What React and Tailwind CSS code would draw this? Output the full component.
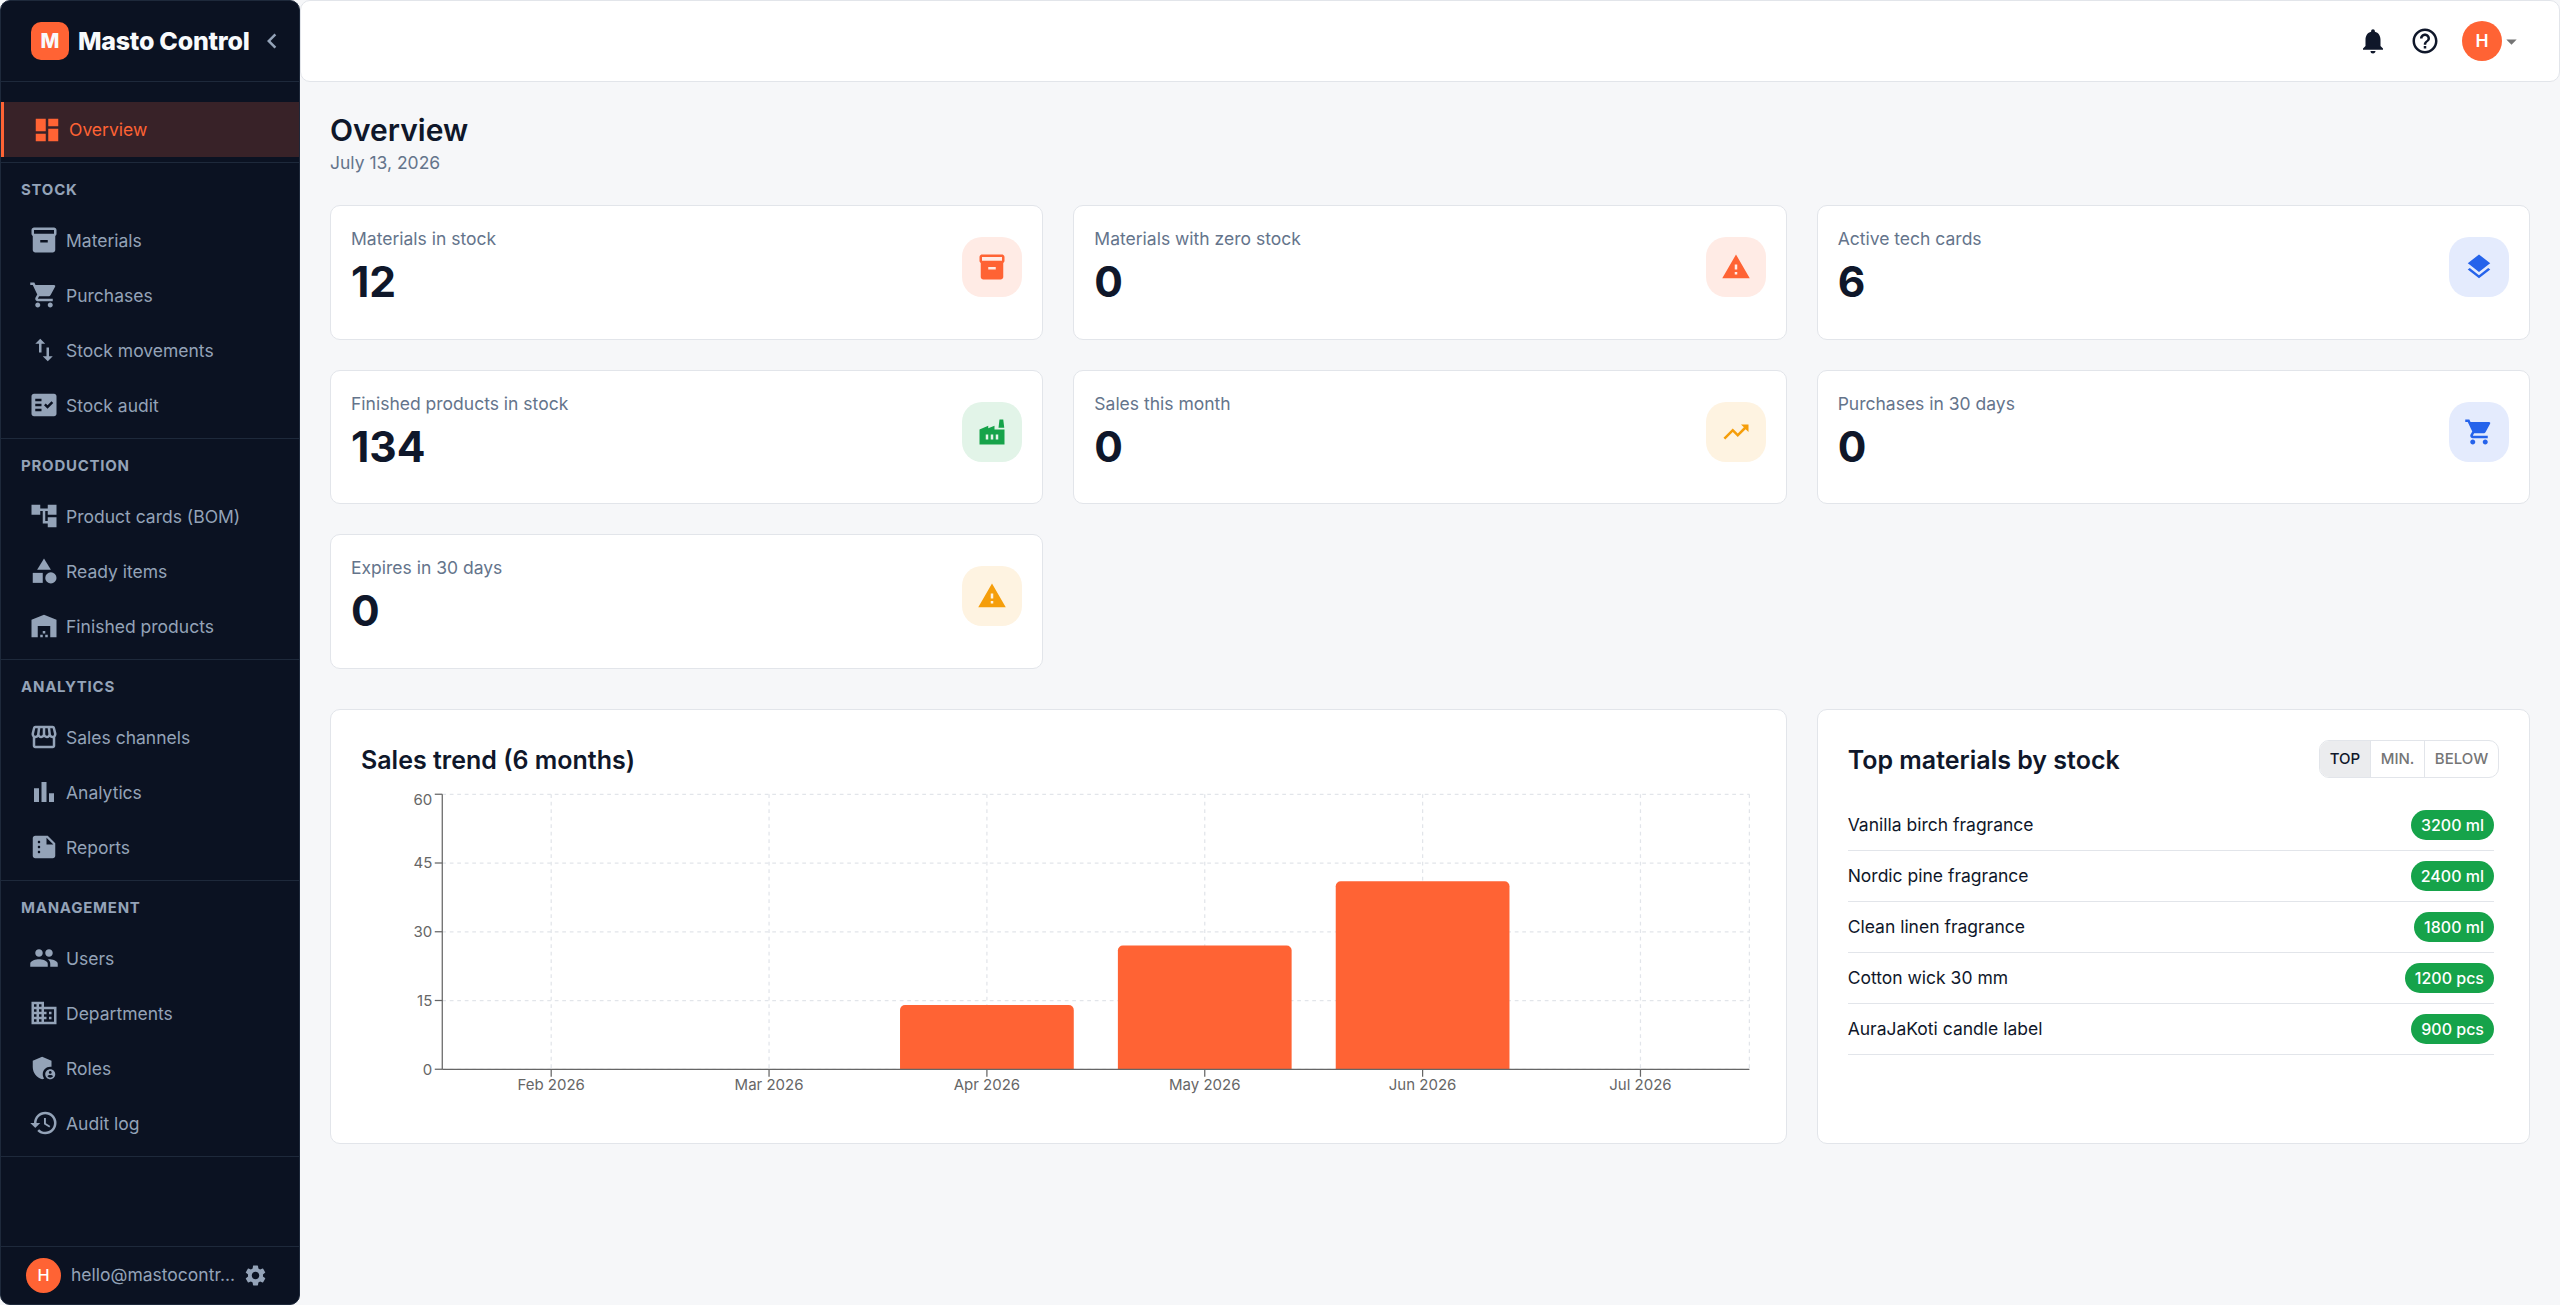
import {
  MdAccountTree,
  MdAdminPanelSettings,
  MdArrowDropDown,
  MdBarChart,
  MdBusiness,
  MdCategory,
  MdChevronLeft,
  MdDashboard,
  MdFactCheck,
  MdFactory,
  MdHelpOutline,
  MdHistory,
  MdInventory2,
  MdLayers,
  MdNotifications,
  MdOutlineStorefront,
  MdPeople,
  MdSettings,
  MdShoppingCart,
  MdSummarize,
  MdSwapVert,
  MdTrendingUp,
  MdWarehouse,
  MdWarning,
} from "react-icons/md";

const sections = [
  {
    title: "Stock",
    items: [
      { label: "Materials", icon: MdInventory2 },
      { label: "Purchases", icon: MdShoppingCart },
      { label: "Stock movements", icon: MdSwapVert },
      { label: "Stock audit", icon: MdFactCheck },
    ],
  },
  {
    title: "Production",
    items: [
      { label: "Product cards (BOM)", icon: MdAccountTree },
      { label: "Ready items", icon: MdCategory },
      { label: "Finished products", icon: MdWarehouse },
    ],
  },
  {
    title: "Analytics",
    items: [
      { label: "Sales channels", icon: MdOutlineStorefront },
      { label: "Analytics", icon: MdBarChart },
      { label: "Reports", icon: MdSummarize },
    ],
  },
  {
    title: "Management",
    items: [
      { label: "Users", icon: MdPeople },
      { label: "Departments", icon: MdBusiness },
      { label: "Roles", icon: MdAdminPanelSettings },
      { label: "Audit log", icon: MdHistory },
    ],
  },
];

const stats = [
  { label: "Materials in stock", value: 12, icon: MdInventory2, tone: "bg-[#ffebe5] text-[#ff6334]" },
  { label: "Materials with zero stock", value: 0, icon: MdWarning, tone: "bg-[#ffebe5] text-[#ff6334]" },
  { label: "Active tech cards", value: 6, icon: MdLayers, tone: "bg-[#e4ebfd] text-[#2563eb]" },
  { label: "Finished products in stock", value: 134, icon: MdFactory, tone: "bg-[#e2f4e8] text-[#16a34a]" },
  { label: "Sales this month", value: 0, icon: MdTrendingUp, tone: "bg-[#fef3e1] text-[#f59e0b]" },
  { label: "Purchases in 30 days", value: 0, icon: MdShoppingCart, tone: "bg-[#e4ebfd] text-[#2563eb]" },
  { label: "Expires in 30 days", value: 0, icon: MdWarning, tone: "bg-[#fef3e1] text-[#f59e0b]" },
];

const sales = [
  { month: "Feb 2026", value: 0 },
  { month: "Mar 2026", value: 0 },
  { month: "Apr 2026", value: 14 },
  { month: "May 2026", value: 27 },
  { month: "Jun 2026", value: 41 },
  { month: "Jul 2026", value: 0 },
];

const materials = [
  { name: "Vanilla birch fragrance", amount: "3200 ml" },
  { name: "Nordic pine fragrance", amount: "2400 ml" },
  { name: "Clean linen fragrance", amount: "1800 ml" },
  { name: "Cotton wick 30 mm", amount: "1200 pcs" },
  { name: "AuraJaKoti candle label", amount: "900 pcs" },
];

const Sidebar = () => (
  <aside className="flex w-[300px] shrink-0 flex-col overflow-hidden rounded-[10px] border border-[#1e293b] bg-[#0b1222] text-[#94a3b8]">
    <div className="flex h-[81px] shrink-0 items-center border-b border-[#1e293b] pl-[30px] pr-3">
      <div className="flex size-[38px] items-center justify-center rounded-[10px] bg-[#ff6334] text-[20px] font-extrabold text-slate-50">
        M
      </div>
      <span className="ml-[9px] whitespace-nowrap pt-[2px] text-[25px] font-extrabold tracking-[-0.01em] text-slate-50">
        Masto Control
      </span>
      <MdChevronLeft className="ml-auto size-[30px] shrink-0" />
    </div>

    <nav className="flex-1 pt-5">
      <div className="mb-[5px] flex h-[55px] items-center border-l-[3px] border-[#ff6334] bg-[#382228] pl-7 text-[#ff6334]">
        <MdDashboard className="size-[30px]" />
        <span className="ml-[7px] pt-[2px] text-[17.5px]">Overview</span>
      </div>
      {sections.map((section) => (
        <div key={section.title} className="border-t border-[#1e293b] pb-[5px]">
          <div className="flex h-[50px] items-center pl-5 pt-[5px] text-[15px] font-bold uppercase tracking-[0.05em]">
            {section.title}
          </div>
          {section.items.map(({ label, icon: Icon }) => (
            <div key={label} className="flex h-[55px] items-center pl-7">
              <Icon className="-mt-px size-[30px]" />
              <span className="ml-[7px] pt-[2px] text-[17.5px]">{label}</span>
            </div>
          ))}
        </div>
      ))}
      <div className="border-t border-[#1e293b]" />
    </nav>

    <div className="flex h-[58px] shrink-0 items-center border-t border-[#1e293b] pl-[25px]">
      <div className="flex size-[35px] shrink-0 items-center justify-center rounded-full bg-[#ff6334] text-[16.25px] font-medium text-white">
        H
      </div>
      <span className="ml-2.5 w-[165px] whitespace-nowrap text-[17.5px]">hello@mastocontr...</span>
      <MdSettings className="ml-[7px] size-[25px]" />
    </div>
  </aside>
);

const Topbar = () => (
  <header className="flex h-[82px] shrink-0 items-center justify-end rounded-[10px] border border-[#e2e5ea] bg-white pr-[35px] text-[#0f172a]">
    <MdNotifications className="size-[30px]" />
    <MdHelpOutline className="ml-[22px] size-[30px]" />
    <div className="ml-[22px] flex size-10 items-center justify-center rounded-full bg-[#ff6334] text-[17.5px] font-semibold text-white">
      H
    </div>
    <MdArrowDropDown className="-ml-[3px] size-[25px] text-[#757575]" />
  </header>
);

const StatCard = ({ label, value, icon: Icon, tone }) => (
  <div className="flex items-center justify-between rounded-[10px] border border-[#e2e5ea] bg-white px-5 pb-[30px] pt-5">
    <div>
      <p className="text-[17.5px] leading-[25px] text-[#64748b]">{label}</p>
      <p className="mt-[5px] text-[42.5px] font-bold leading-[52.5px] text-[#0f172a]">{value}</p>
    </div>
    <div className={`flex size-[60px] items-center justify-center rounded-[20px] ${tone}`}>
      <Icon className="size-[30px]" />
    </div>
  </div>
);

const PLOT = { left: 65, right: 1110.7, top: 5, bottom: 225 };
const MAX = 60;
const yTicks = [0, 15, 30, 45, 60];

const SalesChart = () => {
  const band = (PLOT.right - PLOT.left) / sales.length;
  const barWidth = Math.floor(band * 0.8);
  const y = (v) => PLOT.bottom - (v / MAX) * (PLOT.bottom - PLOT.top);
  const x = (i) => PLOT.left + band * (i + 0.5);

  return (
    <svg viewBox="0 0 1115.7 260" className="mt-[8px] h-[325px] w-full">
      <g stroke="#e2e5ea" strokeDasharray="3 3">
        {yTicks.map((t) => (
          <line key={t} x1={PLOT.left} x2={PLOT.right} y1={y(t)} y2={y(t)} />
        ))}
        {sales.map((s, i) => (
          <line key={s.month} x1={x(i)} x2={x(i)} y1={PLOT.top} y2={PLOT.bottom} />
        ))}
        <line x1={PLOT.right} x2={PLOT.right} y1={PLOT.top} y2={PLOT.bottom} />
      </g>
      {sales.map((s, i) => {
        if (!s.value) return null;
        const left = x(i) - barWidth / 2;
        const right = left + barWidth;
        const top = y(s.value);
        return (
          <path
            key={s.month}
            fill="#ff6334"
            d={`M${left},${top + 4}A4,4 0 0 1 ${left + 4},${top}H${right - 4}A4,4 0 0 1 ${right},${top + 4}V${PLOT.bottom}H${left}Z`}
          />
        );
      })}
      <g stroke="#666">
        <line x1={PLOT.left} x2={PLOT.right} y1={PLOT.bottom} y2={PLOT.bottom} />
        <line x1={PLOT.left} x2={PLOT.left} y1={PLOT.top} y2={PLOT.bottom} />
        {yTicks.map((t) => (
          <line key={t} x1={PLOT.left - 6} x2={PLOT.left} y1={y(t)} y2={y(t)} />
        ))}
        {sales.map((s, i) => (
          <line key={s.month} x1={x(i)} x2={x(i)} y1={PLOT.bottom} y2={PLOT.bottom + 6} />
        ))}
      </g>
      <g fill="#666" fontSize="12">
        {yTicks.map((t) => (
          <text key={t} x={PLOT.left - 8} y={Math.max(y(t), 9.5) + 4.3} textAnchor="end">
            {t}
          </text>
        ))}
        {sales.map((s, i) => (
          <text key={s.month} x={x(i)} y={PLOT.bottom + 16.6} textAnchor="middle">
            {s.month}
          </text>
        ))}
      </g>
    </svg>
  );
};

const TopMaterials = () => (
  <div className="rounded-[10px] border border-[#e2e5ea] bg-white p-[30px]">
    <div className="flex items-start justify-between">
      <h2 className="text-[25px] font-semibold leading-[40px]">Top materials by stock</h2>
      <div className="flex h-[38px] divide-x divide-[#e2e5ea] overflow-hidden rounded-[10px] border border-[#e2e5ea] text-[15px] font-medium text-[#757575]">
        <button type="button" className="bg-[#ebecee] px-[9.75px] text-[#0f172a]">TOP</button>
        <button type="button" className="px-[9.75px]">MIN.</button>
        <button type="button" className="px-[9.75px]">BELOW</button>
      </div>
    </div>
    <ul className="mr-[5px] mt-5">
      {materials.map((m) => (
        <li
          key={m.name}
          className="flex h-[51px] items-center justify-between border-b border-[#e2e5ea] text-[17.5px]"
        >
          <span>{m.name}</span>
          <span className="flex h-[30px] items-center rounded-full bg-[#16a34a] px-2.5 text-[16px] font-medium text-white">
            {m.amount}
          </span>
        </li>
      ))}
    </ul>
  </div>
);

const App = () => (
  <div className="flex h-[1305px] w-[2560px] overflow-hidden bg-[#f6f7f9] font-['Inter',sans-serif] text-[#0f172a]">
    <Sidebar />
    <div className="flex min-w-0 flex-1 flex-col">
      <Topbar />
      <main className="px-[30px] pt-7">
        <h1 className="text-[30px] font-semibold leading-10">Overview</h1>
        <p className="text-[17.5px] leading-[25px] text-[#64748b]">July 13, 2026</p>
        <div className="mt-[30px] grid grid-cols-3 gap-[30px]">
          {stats.map((stat) => (
            <StatCard key={stat.label} {...stat} />
          ))}
        </div>
        <div className="mt-[40.5px] grid h-[435px] grid-cols-3 gap-[30px]">
          <div className="col-span-2 rounded-[10px] border border-[#e2e5ea] bg-white p-[30px]">
            <h2 className="text-[25px] font-semibold leading-[40px]">Sales trend (6 months)</h2>
            <SalesChart />
          </div>
          <TopMaterials />
        </div>
      </main>
    </div>
  </div>
);

export default App;
